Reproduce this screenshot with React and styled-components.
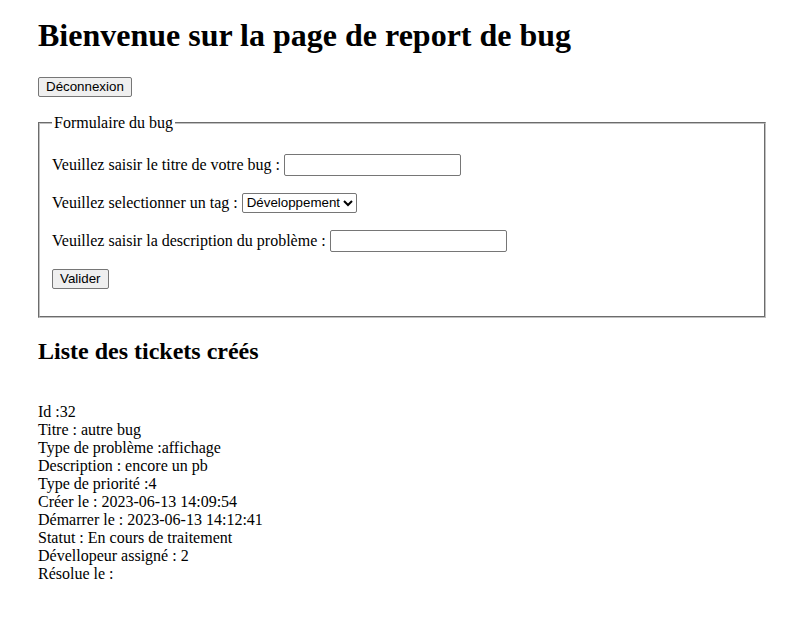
import React, { useState } from 'react';
import styled, { createGlobalStyle } from 'styled-components';

const GlobalStyle = createGlobalStyle`
  html, body {
    margin: 0;
    background: #fff;
  }
  body {
    font-family: "Liberation Serif", "Times New Roman", serif;
    font-size: 16px;
    color: #000;
  }
`;

const Page = styled.div`
  padding: 17px 30px 20px 38px;
`;

const Title = styled.h1`
  font-size: 32px;
  font-weight: bold;
  margin: 0 0 23px;
`;

const Toolbar = styled.div`
  display: flex;
  margin-bottom: 17px;
`;

const Button = styled.button`
  font-family: "Liberation Sans", Arial, sans-serif;
  font-size: 13.33px;
  color: #000;
  background: #efefef;
  border: 1px solid #767676;
  border-radius: 2px;
  padding: 1px 7px;
  height: 20px;
  line-height: 16px;
  cursor: default;
`;

const BugFieldset = styled.fieldset`
  margin: 0;
  border: 2px groove #c0c0c0;
  padding: 5.6px 12px 10px;
`;

const Legend = styled.legend`
  padding: 0 2px;
  line-height: 18px;
`;

const FieldRow = styled.p`
  margin: 16px 0;
  display: flex;
  align-items: center;
  height: 22px;
  white-space: pre;
`;

const TextInput = styled.input`
  box-sizing: border-box;
  width: 177px;
  height: 22px;
  font-family: "Liberation Sans", Arial, sans-serif;
  font-size: 13.33px;
  border: 1px solid #767676;
  border-radius: 2px;
  padding: 1px 2px;
  margin-left: 4px;
`;

const TagSelect = styled.select`
  box-sizing: border-box;
  width: 115px;
  height: 20px;
  font-family: "Liberation Sans", Arial, sans-serif;
  font-size: 13.33px;
  border: 1px solid #767676;
  border-radius: 2px;
  padding: 0;
  margin-left: 4px;
  color: #000;
  background: #fff;
`;

const SectionTitle = styled.h2`
  font-size: 24px;
  font-weight: bold;
  margin: 20px 0 38px;
`;

const TicketList = styled.div`
  line-height: 18px;
`;

const TicketLine = styled.div`
  white-space: pre;
`;

const ticket = [
  'Id :32',
  'Titre : autre bug',
  'Type de problème :affichage',
  'Description : encore un pb',
  'Type de priorité :4',
  'Créer le : 2023-06-13 14:09:54',
  'Démarrer le : 2023-06-13 14:12:41',
  'Statut : En cours de traitement',
  'Dévellopeur assigné : 2',
  'Résolue le :',
];

export default function App() {
  const [titre, setTitre] = useState('');
  const [tag, setTag] = useState('dev');
  const [description, setDescription] = useState('');

  return (
    <Page>
      <GlobalStyle />
      <Title>Bienvenue sur la page de report de bug</Title>
      <Toolbar>
        <Button type="button">Déconnexion</Button>
      </Toolbar>
      <form onSubmit={(e) => e.preventDefault()}>
        <BugFieldset>
          <Legend>Formulaire du bug</Legend>
          <FieldRow>
            Veuillez saisir le titre de votre bug :
            <TextInput type="text" value={titre} onChange={(e) => setTitre(e.target.value)} />
          </FieldRow>
          <FieldRow>
            Veuillez selectionner un tag :
            <TagSelect value={tag} onChange={(e) => setTag(e.target.value)}>
              <option value="dev">Développement</option>
              <option value="affichage">affichage</option>
            </TagSelect>
          </FieldRow>
          <FieldRow>
            Veuillez saisir la description du problème :
            <TextInput type="text" value={description} onChange={(e) => setDescription(e.target.value)} />
          </FieldRow>
          <FieldRow>
            <Button type="submit">Valider</Button>
          </FieldRow>
        </BugFieldset>
      </form>
      <SectionTitle>Liste des tickets créés</SectionTitle>
      <TicketList>
        {ticket.map((line) => (
          <TicketLine key={line}>{line}</TicketLine>
        ))}
      </TicketList>
    </Page>
  );
}
